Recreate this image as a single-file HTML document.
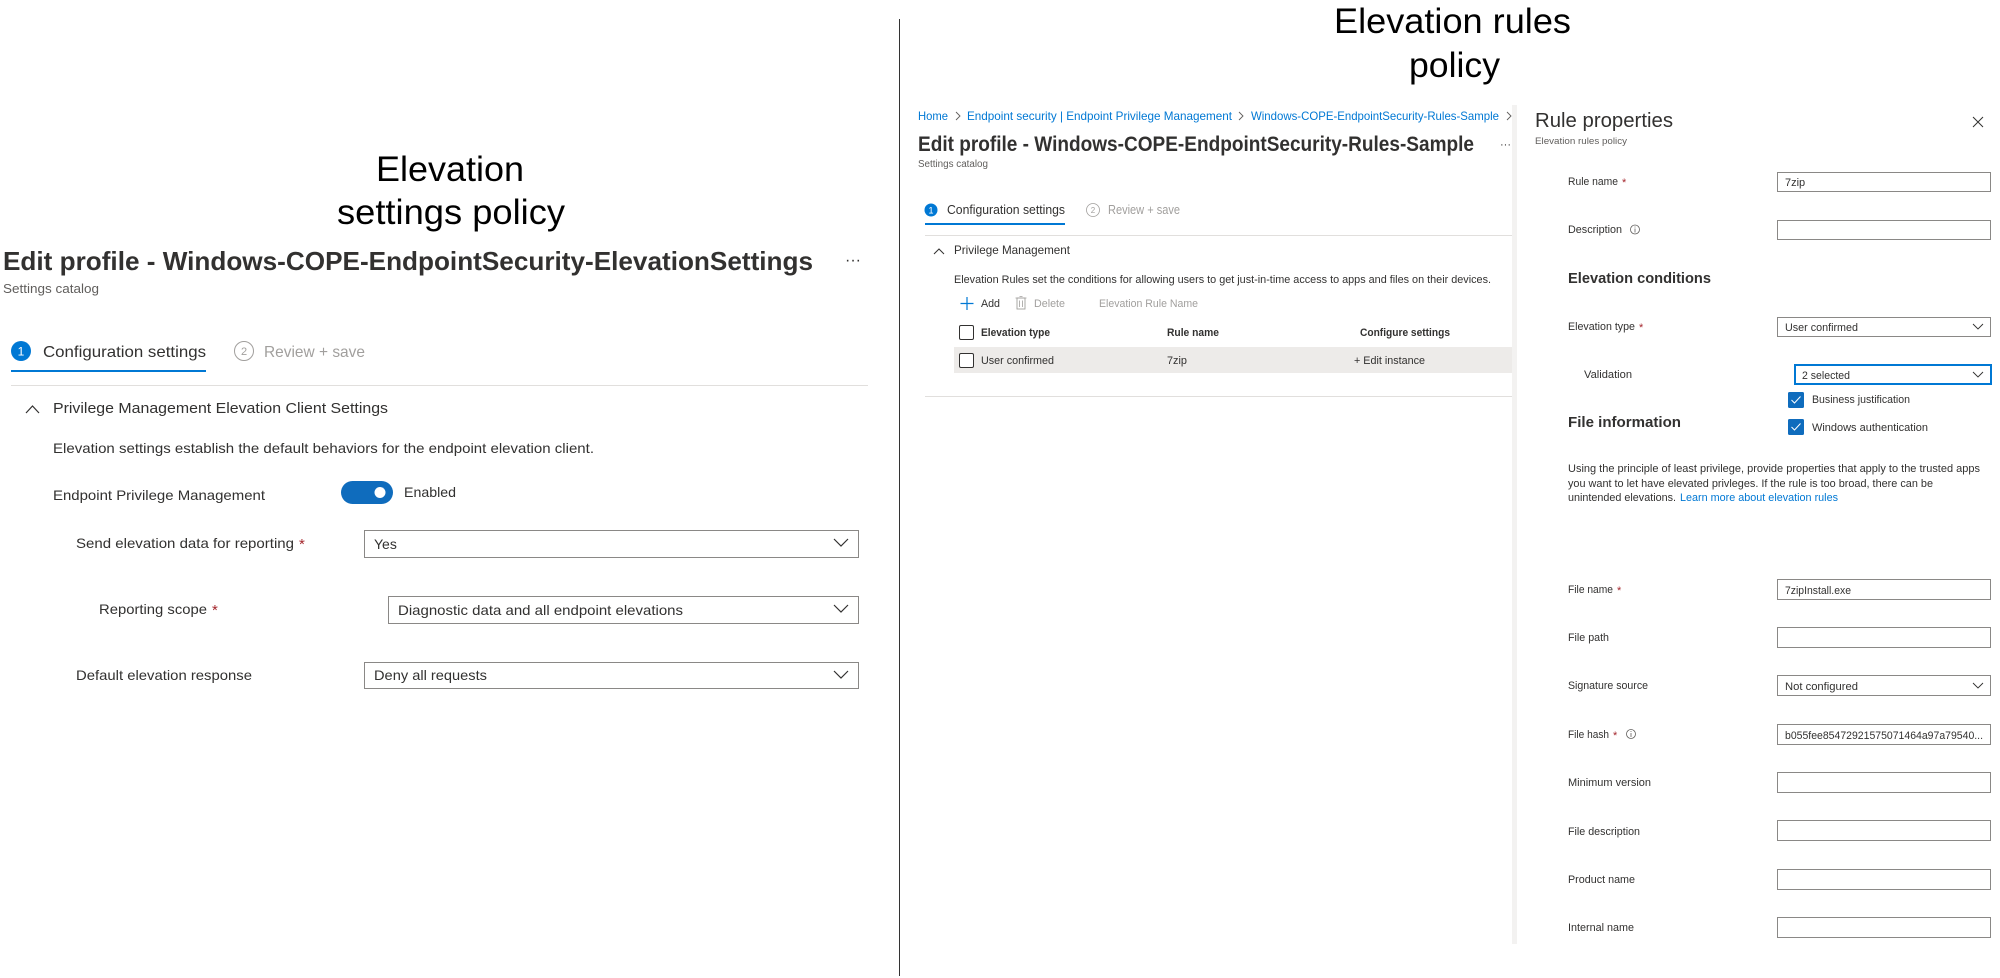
<!DOCTYPE html>
<html><head><meta charset="utf-8"><style>
html,body{margin:0;padding:0;background:#fff;width:2000px;height:978px;overflow:hidden}
svg{display:block}
text{font-family:"Liberation Sans",sans-serif;fill:#323130}
.a{font-family:"Liberation Sans",Arial,sans-serif;fill:#000}
.l{fill:#0078d4}
.g{fill:#a19f9d}
.s{fill:#605e5c}
.b{font-weight:bold}
.r{fill:#a4262c}
</style></head><body>
<svg width="2000" height="978" viewBox="0 0 2000 978" xmlns="http://www.w3.org/2000/svg">
<!-- divider -->
<line x1="899.5" y1="19" x2="899.5" y2="976" stroke="#333" stroke-width="1"/>

<!-- LEFT -->
<text class="a" x="376" y="181" font-size="35" textLength="148" lengthAdjust="spacingAndGlyphs">Elevation</text>
<text class="a" x="337" y="224" font-size="35" textLength="228" lengthAdjust="spacingAndGlyphs">settings policy</text>
<text x="3" y="270" font-size="26" font-weight="bold" fill="#201f1e" textLength="810" lengthAdjust="spacingAndGlyphs">Edit profile - Windows-COPE-EndpointSecurity-ElevationSettings</text>
<text x="845" y="265" font-size="16" fill="#323130">···</text>
<text class="s" x="3" y="293" font-size="13" textLength="96" lengthAdjust="spacingAndGlyphs">Settings catalog</text>
<circle cx="21" cy="351" r="10" fill="#0078d4"/>
<text x="21" y="355.5" font-size="12" text-anchor="middle" style="fill:#fff">1</text>
<text x="43" y="357" font-size="16" textLength="163" lengthAdjust="spacingAndGlyphs">Configuration settings</text>
<rect x="11" y="370" width="195" height="2" fill="#0078d4"/>
<circle cx="244" cy="351" r="9.5" fill="none" stroke="#a19f9d" stroke-width="1"/>
<text class="g" x="244" y="355" font-size="11" text-anchor="middle">2</text>
<text class="g" x="264" y="357" font-size="16" textLength="101" lengthAdjust="spacingAndGlyphs">Review + save</text>
<rect x="11" y="385" width="857" height="1" fill="#e1dfdd"/>
<path d="M26 413 L32.5 406 L39 413" fill="none" stroke="#323130" stroke-width="1.2"/>
<text x="53" y="413" font-size="15" textLength="335" lengthAdjust="spacingAndGlyphs">Privilege Management Elevation Client Settings</text>
<text x="53" y="453" font-size="14" textLength="541" lengthAdjust="spacingAndGlyphs">Elevation settings establish the default behaviors for the endpoint elevation client.</text>
<text x="53" y="500" font-size="14" textLength="212" lengthAdjust="spacingAndGlyphs">Endpoint Privilege Management</text>
<rect x="341" y="481" width="52" height="23" rx="11.5" fill="#0f6cbd"/>
<circle cx="380" cy="492.5" r="5.5" fill="#fff"/>
<text x="404" y="497" font-size="14" textLength="52" lengthAdjust="spacingAndGlyphs">Enabled</text>

<text x="76" y="548" font-size="14" textLength="218" lengthAdjust="spacingAndGlyphs">Send elevation data for reporting</text>
<text class="r" x="299" y="549" font-size="15">*</text>
<rect x="364.5" y="530.5" width="494" height="27" fill="#fff" stroke="#8a8886"/>
<text x="374" y="549" font-size="14">Yes</text>
<path d="M834 539 L841 546 L848 539" fill="none" stroke="#323130" stroke-width="1.2"/>

<text x="99" y="614" font-size="14" textLength="108" lengthAdjust="spacingAndGlyphs">Reporting scope</text>
<text class="r" x="212" y="615" font-size="15">*</text>
<rect x="388.5" y="596.5" width="470" height="27" fill="#fff" stroke="#8a8886"/>
<text x="398" y="615" font-size="14" textLength="285" lengthAdjust="spacingAndGlyphs">Diagnostic data and all endpoint elevations</text>
<path d="M834 605 L841 612 L848 605" fill="none" stroke="#323130" stroke-width="1.2"/>

<text x="76" y="680" font-size="14" textLength="176" lengthAdjust="spacingAndGlyphs">Default elevation response</text>
<rect x="364.5" y="662.5" width="494" height="26" fill="#fff" stroke="#8a8886"/>
<text x="374" y="680" font-size="14" textLength="113" lengthAdjust="spacingAndGlyphs">Deny all requests</text>
<path d="M834 671 L841 678 L848 671" fill="none" stroke="#323130" stroke-width="1.2"/>

<!-- RIGHT title -->
<text class="a" x="1334" y="33" font-size="35" textLength="237" lengthAdjust="spacingAndGlyphs">Elevation rules</text>
<text class="a" x="1409" y="77" font-size="35" textLength="91" lengthAdjust="spacingAndGlyphs">policy</text>

<!-- RIGHT main -->
<text class="l" x="918" y="120" font-size="12" textLength="30" lengthAdjust="spacingAndGlyphs">Home</text>
<path d="M956 112 L960 116 L956 120" fill="none" stroke="#605e5c" stroke-width="0.9"/>
<text class="l" x="967" y="120" font-size="12" textLength="265" lengthAdjust="spacingAndGlyphs">Endpoint security | Endpoint Privilege Management</text>
<path d="M1239 112 L1243 116 L1239 120" fill="none" stroke="#605e5c" stroke-width="0.9"/>
<text class="l" x="1251" y="120" font-size="12" textLength="248" lengthAdjust="spacingAndGlyphs">Windows-COPE-EndpointSecurity-Rules-Sample</text>
<path d="M1507 112 L1511 116 L1507 120" fill="none" stroke="#605e5c" stroke-width="0.9"/>
<text x="918" y="151" font-size="21" font-weight="bold" fill="#201f1e" textLength="556" lengthAdjust="spacingAndGlyphs">Edit profile - Windows-COPE-EndpointSecurity-Rules-Sample</text>
<text x="1500" y="148" font-size="11">···</text>
<text class="s" x="918" y="167" font-size="10" textLength="70" lengthAdjust="spacingAndGlyphs">Settings catalog</text>
<circle cx="931" cy="210" r="6.5" fill="#0078d4"/>
<text x="931" y="213.5" font-size="9" text-anchor="middle" style="fill:#fff">1</text>
<text x="947" y="214" font-size="13" textLength="118" lengthAdjust="spacingAndGlyphs">Configuration settings</text>
<rect x="925" y="223" width="140" height="2" fill="#0078d4"/>
<circle cx="1093" cy="210" r="6.5" fill="none" stroke="#a19f9d" stroke-width="0.8"/>
<text class="g" x="1093" y="213" font-size="8" text-anchor="middle">2</text>
<text class="g" x="1108" y="214" font-size="13" textLength="72" lengthAdjust="spacingAndGlyphs">Review + save</text>
<rect x="925" y="235" width="592" height="1" fill="#e1dfdd"/>
<path d="M934 254 L939 249 L944 254" fill="none" stroke="#323130" stroke-width="1"/>
<text x="954" y="254" font-size="12" textLength="116" lengthAdjust="spacingAndGlyphs">Privilege Management</text>
<text x="954" y="283" font-size="11" textLength="537" lengthAdjust="spacingAndGlyphs">Elevation Rules set the conditions for allowing users to get just-in-time access to apps and files on their devices.</text>
<path d="M967 297 V310 M960.5 303.5 H973.5" stroke="#0078d4" stroke-width="1.2"/>
<text x="981" y="307" font-size="11" textLength="19" lengthAdjust="spacingAndGlyphs">Add</text>
<rect x="1017" y="298" width="8" height="11" fill="none" stroke="#a19f9d" stroke-width="0.9"/>
<path d="M1015.5 298 H1026.5 M1019.5 296.5 H1022.5 M1019.5 300.5 V307 M1022.5 300.5 V307" stroke="#a19f9d" stroke-width="0.8"/>
<text class="g" x="1034" y="307" font-size="11" textLength="31" lengthAdjust="spacingAndGlyphs">Delete</text>
<text class="g" x="1099" y="307" font-size="11" textLength="99" lengthAdjust="spacingAndGlyphs">Elevation Rule Name</text>
<rect x="959.5" y="325.5" width="14" height="14" rx="1.5" fill="#fff" stroke="#323130"/>
<text x="981" y="336" font-size="11" font-weight="bold" textLength="69" lengthAdjust="spacingAndGlyphs">Elevation type</text>
<text x="1167" y="336" font-size="11" font-weight="bold" textLength="52" lengthAdjust="spacingAndGlyphs">Rule name</text>
<text x="1360" y="336" font-size="11" font-weight="bold" textLength="90" lengthAdjust="spacingAndGlyphs">Configure settings</text>
<rect x="954" y="347" width="563" height="26" fill="#edebe9"/>
<rect x="959.5" y="353.5" width="14" height="14" rx="1.5" fill="#fff" stroke="#323130"/>
<text x="981" y="364" font-size="11" textLength="73" lengthAdjust="spacingAndGlyphs">User confirmed</text>
<text x="1167" y="364" font-size="11" textLength="20" lengthAdjust="spacingAndGlyphs">7zip</text>
<text x="1354" y="364" font-size="11" textLength="71" lengthAdjust="spacingAndGlyphs">+ Edit instance</text>
<rect x="925" y="396" width="592" height="1" fill="#e1dfdd"/>

<!-- PANEL -->
<rect x="1512" y="105" width="6" height="839" fill="#f3f2f1"/>
<rect x="1517" y="105" width="483" height="839" fill="#fff"/>
<text x="1535" y="127" font-size="20" fill="#201f1e" textLength="138" lengthAdjust="spacingAndGlyphs">Rule properties</text>
<text class="s" x="1535" y="144" font-size="9.5" textLength="92" lengthAdjust="spacingAndGlyphs">Elevation rules policy</text>
<path d="M1973 117 L1983 127 M1983 117 L1973 127" stroke="#323130" stroke-width="1"/>

<text x="1568" y="185" font-size="11" textLength="50" lengthAdjust="spacingAndGlyphs">Rule name</text>
<text class="r" x="1622" y="186" font-size="11">*</text>
<rect x="1777.5" y="172.5" width="213" height="19" fill="#fff" stroke="#8a8886"/>
<text x="1785" y="186" font-size="11">7zip</text>

<text x="1568" y="233" font-size="11" textLength="54" lengthAdjust="spacingAndGlyphs">Description</text>
<circle cx="1635" cy="229.5" r="4.5" fill="none" stroke="#605e5c" stroke-width="0.8"/>
<path d="M1635 228.5 V232.5" stroke="#605e5c" stroke-width="0.8"/><circle cx="1635" cy="227" r="0.5" fill="#605e5c"/>
<rect x="1777.5" y="220.5" width="213" height="19" fill="#fff" stroke="#8a8886"/>

<text x="1568" y="283" font-size="15" font-weight="bold" fill="#201f1e" textLength="143" lengthAdjust="spacingAndGlyphs">Elevation conditions</text>

<text x="1568" y="330" font-size="11" textLength="67" lengthAdjust="spacingAndGlyphs">Elevation type</text>
<text class="r" x="1639" y="331" font-size="11">*</text>
<rect x="1777.5" y="317.5" width="213" height="19" fill="#fff" stroke="#8a8886"/>
<text x="1785" y="331" font-size="11" textLength="73" lengthAdjust="spacingAndGlyphs">User confirmed</text>
<path d="M1973 324 L1978 329 L1983 324" fill="none" stroke="#323130" stroke-width="0.9"/>

<text x="1584" y="378" font-size="11" textLength="48" lengthAdjust="spacingAndGlyphs">Validation</text>
<rect x="1795" y="365" width="196" height="19" fill="#fff" stroke="#0078d4" stroke-width="2"/>
<text x="1802" y="379" font-size="11" textLength="48" lengthAdjust="spacingAndGlyphs">2 selected</text>
<path d="M1973 372 L1978 377 L1983 372" fill="none" stroke="#323130" stroke-width="0.9"/>

<rect x="1788" y="392" width="16" height="16" rx="1.5" fill="#0f6cbd"/>
<path d="M1791.5 400 L1794.5 403 L1800.5 396.5" fill="none" stroke="#fff" stroke-width="1"/>
<text x="1812" y="403" font-size="11" textLength="98" lengthAdjust="spacingAndGlyphs">Business justification</text>
<rect x="1788" y="419" width="16" height="16" rx="1.5" fill="#0f6cbd"/>
<path d="M1791.5 427 L1794.5 430 L1800.5 423.5" fill="none" stroke="#fff" stroke-width="1"/>
<text x="1812" y="431" font-size="11" textLength="116" lengthAdjust="spacingAndGlyphs">Windows authentication</text>

<text x="1568" y="427" font-size="15" font-weight="bold" fill="#201f1e" textLength="113" lengthAdjust="spacingAndGlyphs">File information</text>

<text x="1568" y="472" font-size="11" textLength="412" lengthAdjust="spacingAndGlyphs">Using the principle of least privilege, provide properties that apply to the trusted apps</text>
<text x="1568" y="487" font-size="11" textLength="365" lengthAdjust="spacingAndGlyphs">you want to let have elevated privleges. If the rule is too broad, there can be</text>
<text x="1568" y="501" font-size="11" textLength="108" lengthAdjust="spacingAndGlyphs">unintended elevations.</text>
<text class="l" x="1680" y="501" font-size="11" textLength="158" lengthAdjust="spacingAndGlyphs">Learn more about elevation rules</text>

<!-- file rows -->
<text x="1568" y="593" font-size="11" textLength="45" lengthAdjust="spacingAndGlyphs">File name</text>
<text class="r" x="1617" y="594" font-size="11">*</text>
<rect x="1777.5" y="579.5" width="213" height="20" fill="#fff" stroke="#8a8886"/>
<text x="1785" y="594" font-size="11" textLength="66" lengthAdjust="spacingAndGlyphs">7zipInstall.exe</text>

<text x="1568" y="641" font-size="11" textLength="41" lengthAdjust="spacingAndGlyphs">File path</text>
<rect x="1777.5" y="627.5" width="213" height="20" fill="#fff" stroke="#8a8886"/>

<text x="1568" y="689" font-size="11" textLength="80" lengthAdjust="spacingAndGlyphs">Signature source</text>
<rect x="1777.5" y="675.5" width="213" height="20" fill="#fff" stroke="#8a8886"/>
<text x="1785" y="690" font-size="11" textLength="73" lengthAdjust="spacingAndGlyphs">Not configured</text>
<path d="M1973 683 L1978 688 L1983 683" fill="none" stroke="#323130" stroke-width="0.9"/>

<text x="1568" y="738" font-size="11" textLength="41" lengthAdjust="spacingAndGlyphs">File hash</text>
<text class="r" x="1613" y="739" font-size="11">*</text>
<circle cx="1631" cy="734" r="4.5" fill="none" stroke="#605e5c" stroke-width="0.8"/>
<path d="M1631 733 V737" stroke="#605e5c" stroke-width="0.8"/><circle cx="1631" cy="731.5" r="0.5" fill="#605e5c"/>
<rect x="1777.5" y="724.5" width="213" height="20" fill="#fff" stroke="#8a8886"/>
<text x="1785" y="739" font-size="11" textLength="198" lengthAdjust="spacingAndGlyphs">b055fee85472921575071464a97a79540...</text>

<text x="1568" y="786" font-size="11" textLength="83" lengthAdjust="spacingAndGlyphs">Minimum version</text>
<rect x="1777.5" y="772.5" width="213" height="20" fill="#fff" stroke="#8a8886"/>

<text x="1568" y="835" font-size="11" textLength="72" lengthAdjust="spacingAndGlyphs">File description</text>
<rect x="1777.5" y="820.5" width="213" height="20" fill="#fff" stroke="#8a8886"/>

<text x="1568" y="883" font-size="11" textLength="67" lengthAdjust="spacingAndGlyphs">Product name</text>
<rect x="1777.5" y="869.5" width="213" height="20" fill="#fff" stroke="#8a8886"/>

<text x="1568" y="931" font-size="11" textLength="66" lengthAdjust="spacingAndGlyphs">Internal name</text>
<rect x="1777.5" y="917.5" width="213" height="20" fill="#fff" stroke="#8a8886"/>
</svg>
</body></html>
